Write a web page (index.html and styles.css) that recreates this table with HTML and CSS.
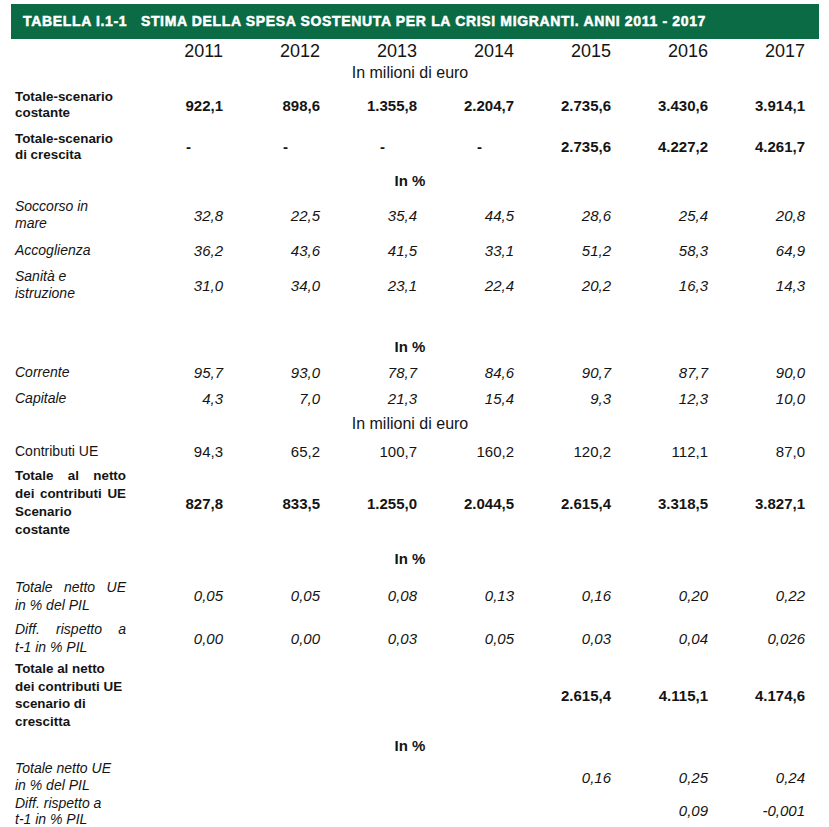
FILE: index.html
```html
<!DOCTYPE html>
<html lang="it">
<head>
<meta charset="utf-8">
<title>Tabella I.1-1</title>
<link rel="stylesheet" href="styles.css">
</head>
<body>
<div class="page">
  <div class="title-bar">TABELLA I.1-1&nbsp;&nbsp;&nbsp;STIMA DELLA SPESA SOSTENUTA PER LA CRISI MIGRANTI. ANNI 2011 - 2017</div>
  <table class="data">
    <colgroup>
      <col class="c-lab">
      <col class="c-num"><col class="c-num"><col class="c-num"><col class="c-num"><col class="c-num"><col class="c-num"><col class="c-num">
    </colgroup>
    <tbody>
      <tr class="years h23">
        <td></td><td>2011</td><td>2012</td><td>2013</td><td>2014</td><td>2015</td><td>2016</td><td>2017</td>
      </tr>
      <tr class="sec h22"><td colspan="8">In milioni di euro</td></tr>
      <tr class="bold h42">
        <td class="lab lh16">Totale-scenario<br>costante</td>
        <td>922,1</td><td>898,6</td><td>1.355,8</td><td>2.204,7</td><td>2.735,6</td><td>3.430,6</td><td>3.914,1</td>
      </tr>
      <tr class="bold h41">
        <td class="lab lh16">Totale-scenario<br>di crescita</td>
        <td class="dash">-</td><td class="dash">-</td><td class="dash">-</td><td class="dash">-</td><td>2.735,6</td><td>4.227,2</td><td>4.261,7</td>
      </tr>
      <tr class="sec pct h27"><td colspan="8">In %</td></tr>
      <tr class="ital h42">
        <td class="lab">Soccorso in<br>mare</td>
        <td>32,8</td><td>22,5</td><td>35,4</td><td>44,5</td><td>28,6</td><td>25,4</td><td>20,8</td>
      </tr>
      <tr class="ital h28">
        <td class="lab">Accoglienza</td>
        <td>36,2</td><td>43,6</td><td>41,5</td><td>33,1</td><td>51,2</td><td>58,3</td><td>64,9</td>
      </tr>
      <tr class="ital h42">
        <td class="lab">Sanità e<br>istruzione</td>
        <td>31,0</td><td>34,0</td><td>23,1</td><td>22,4</td><td>20,2</td><td>16,3</td><td>14,3</td>
      </tr>
      <tr class="h27"><td colspan="8"></td></tr>
      <tr class="sec pct h26"><td colspan="8">In %</td></tr>
      <tr class="ital h26">
        <td class="lab">Corrente</td>
        <td>95,7</td><td>93,0</td><td>78,7</td><td>84,6</td><td>90,7</td><td>87,7</td><td>90,0</td>
      </tr>
      <tr class="ital h26">
        <td class="lab">Capitale</td>
        <td>4,3</td><td>7,0</td><td>21,3</td><td>15,4</td><td>9,3</td><td>12,3</td><td>10,0</td>
      </tr>
      <tr class="sec h26"><td colspan="8">In milioni di euro</td></tr>
      <tr class="plain h28">
        <td class="lab">Contributi UE</td>
        <td>94,3</td><td>65,2</td><td>100,7</td><td>160,2</td><td>120,2</td><td>112,1</td><td>87,0</td>
      </tr>
      <tr class="bold h76">
        <td class="lab lh18"><span class="j">Totale al netto</span><span class="j">dei contributi UE</span>Scenario<br>costante</td>
        <td>827,8</td><td>833,5</td><td>1.255,0</td><td>2.044,5</td><td>2.615,4</td><td>3.318,5</td><td>3.827,1</td>
      </tr>
      <tr class="sec pct h34"><td colspan="8">In %</td></tr>
      <tr class="ital h41">
        <td class="lab lh18"><span class="j">Totale netto UE</span>in % del PIL</td>
        <td>0,05</td><td>0,05</td><td>0,08</td><td>0,13</td><td>0,16</td><td>0,20</td><td>0,22</td>
      </tr>
      <tr class="ital h44">
        <td class="lab lh18"><span class="j">Diff. rispetto a</span>t-1 in % PIL</td>
        <td>0,00</td><td>0,00</td><td>0,03</td><td>0,05</td><td>0,03</td><td>0,04</td><td>0,026</td>
      </tr>
      <tr class="bold h70">
        <td class="lab lh175">Totale al netto<br>dei contributi UE<br>scenario di<br>crescitta</td>
        <td></td><td></td><td></td><td></td><td>2.615,4</td><td>4.115,1</td><td>4.174,6</td>
      </tr>
      <tr class="sec pct h30"><td colspan="8">In %</td></tr>
      <tr class="ital h34">
        <td class="lab">Totale netto UE<br>in % del PIL</td>
        <td></td><td></td><td></td><td></td><td>0,16</td><td>0,25</td><td>0,24</td>
      </tr>
      <tr class="ital h33">
        <td class="lab lh16">Diff. rispetto a<br>t-1 in % PIL</td>
        <td></td><td></td><td></td><td></td><td></td><td>0,09</td><td>-0,001</td>
      </tr>
    </tbody>
  </table>
</div>
</body>
</html>
```
FILE: styles.css
```css
html, body {
  margin: 0;
  padding: 0;
  background: #ffffff;
}

body {
  font-family: "Liberation Sans", Arial, sans-serif;
  color: #141414;
}

.page {
  padding: 4px 0 0 11px;
}

.title-bar {
  width: 808px;
  height: 35px;
  box-sizing: border-box;
  background: #0a6b45;
  color: #ffffff;
  font-weight: 700;
  font-size: 14px;
  letter-spacing: 0.66px;
  line-height: 35px;
  padding-left: 12px;
  white-space: nowrap;
  -webkit-text-stroke: 0.5px #ffffff;
}

.data {
  width: 794px;
  table-layout: fixed;
  border-collapse: collapse;
  border-spacing: 0;
}

.c-lab {
  width: 115px;
}

.c-num {
  width: 97px;
}

.data td {
  padding: 0;
  text-align: right;
  vertical-align: middle;
  font-size: 15px;
  white-space: nowrap;
}

.data td.lab {
  text-align: left;
  padding-left: 4px;
  font-size: 14px;
  line-height: 17px;
  white-space: normal;
}

.data td.lh16 { line-height: 16px; }
.data td.lh18 { line-height: 18px; }
.data td.lh175 { line-height: 17.5px; }

.j {
  display: block;
  text-align: justify;
  text-align-last: justify;
}

.years td {
  font-size: 18px;
  line-height: 20px;
}

.sec td {
  text-align: center;
  font-size: 16px;
  padding-left: 4px;
}

.sec.pct td {
  font-weight: 700;
  font-size: 15px;
}

.bold td {
  font-weight: 700;
}

.bold td.lab {
  font-size: 13.4px;
}

.ital td {
  font-style: italic;
}

.data td.dash {
  padding-right: 32px;
}

.h22 { height: 22px; }
.h23 { height: 23px; }
.h26 { height: 26px; }
.h27 { height: 27px; }
.h28 { height: 28px; }
.h30 { height: 30px; }
.h33 { height: 33px; }
.h34 { height: 34px; }
.h41 { height: 41px; }
.h42 { height: 42px; }
.h44 { height: 44px; }
.h70 { height: 70px; }
.h76 { height: 76px; }
```
